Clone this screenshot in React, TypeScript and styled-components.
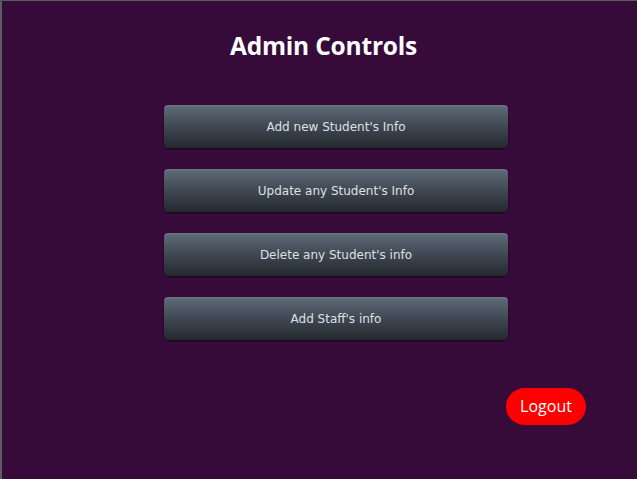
import React from 'react';
import styled, { createGlobalStyle } from 'styled-components';

const GlobalStyle = createGlobalStyle`
  html, body {
    margin: 0;
    padding: 0;
    background: #360b3a;
  }
`;

const actions = [
  "Add new Student's Info",
  "Update any Student's Info",
  "Delete any Student's info",
  "Add Staff's info",
];

const App: React.FC = () => {
  return (
    <>
      <GlobalStyle />
      <Frame>
        <Title>Admin Controls</Title>
        <ButtonList>
          {actions.map((label) => (
            <ActionButton key={label}>{label}</ActionButton>
          ))}
        </ButtonList>
        <Footer>
          <LogoutButton>Logout</LogoutButton>
        </Footer>
      </Frame>
    </>
  );
};

const Frame = styled.div`
  box-sizing: border-box;
  width: 637px;
  height: 479px;
  background: #360b3a;
  border-top: 1px solid #5c5c5c;
  border-left: 2px solid #5c5c5c;
  display: flex;
  flex-direction: column;
  overflow: hidden;
`;

const Title = styled.h1`
  margin: 29px 0 0;
  padding-left: 8px;
  text-align: center;
  font-family: 'Open Sans', 'Liberation Sans', sans-serif;
  font-weight: 700;
  font-size: 24.5px;
  line-height: 32px;
  color: #ffffff;
  letter-spacing: -0.2px;
`;

const ButtonList = styled.div`
  display: flex;
  flex-direction: column;
  gap: 21px;
  margin: 43px 0 0 162px;
`;

const ActionButton = styled.button`
  width: 344px;
  height: 43px;
  border: none;
  border-radius: 4px;
  background: linear-gradient(180deg, #606c7a 0%, #424b56 45%, #23282d 100%);
  box-shadow: 0 1px 2px rgba(0, 0, 0, 0.7), inset 0 1px 0 rgba(255, 255, 255, 0.08);
  color: #dde1e5;
  font-family: 'DejaVu Sans', sans-serif;
  font-size: 12px;
  cursor: pointer;
`;

const Footer = styled.div`
  display: flex;
  justify-content: flex-end;
  padding-right: 51px;
  margin-top: 48px;
`;

const LogoutButton = styled.button`
  width: 80px;
  height: 37px;
  border: none;
  border-radius: 19px;
  background: #ff0000;
  color: #ffffff;
  font-family: 'Open Sans', 'Liberation Sans', sans-serif;
  font-size: 16px;
  padding-bottom: 2px;
  cursor: pointer;
`;

export default App;
